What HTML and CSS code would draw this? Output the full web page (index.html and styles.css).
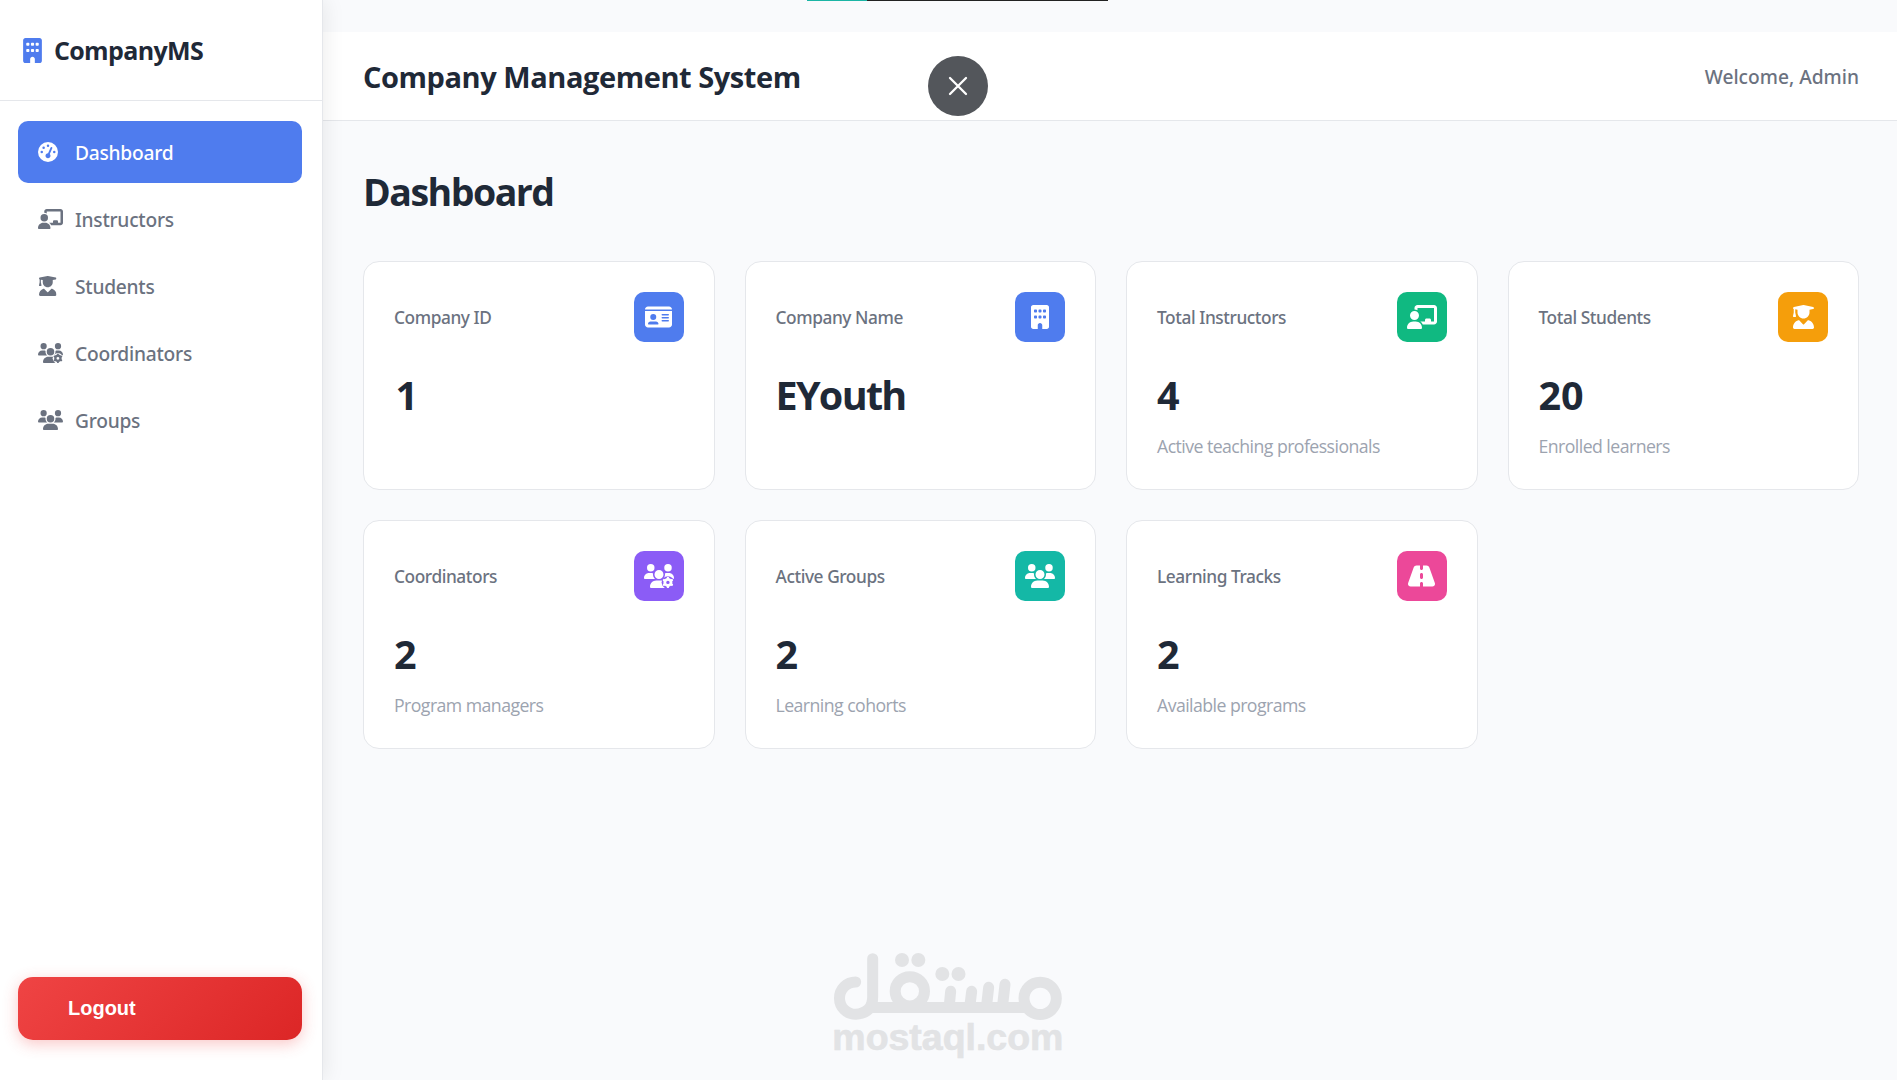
FILE: index.html
```
<!DOCTYPE html>
<html lang="en">
<head>
<meta charset="utf-8">
<title>Company Management System</title>
<link rel="stylesheet" href="styles.css">
</head>
<body>
<svg class="sprite" aria-hidden="true">
  <symbol id="building" viewBox="0 0 384 512"><path d="M48 0C21.500 0 0 21.500 0 48V464c0 26.500 21.500 48 48 48h96V432c0-26.500 21.500-48 48-48s48 21.500 48 48v80h96c26.500 0 48-21.500 48-48V48c0-26.500-21.500-48-48-48H48zM64 240c0-8.800 7.200-16 16-16h32c8.800 0 16 7.200 16 16v32c0 8.800-7.200 16-16 16H80c-8.800 0-16-7.200-16-16V240zm112-16h32c8.800 0 16 7.200 16 16v32c0 8.800-7.200 16-16 16H176c-8.800 0-16-7.200-16-16V240c0-8.800 7.200-16 16-16zm80 16c0-8.800 7.200-16 16-16h32c8.800 0 16 7.200 16 16v32c0 8.800-7.200 16-16 16H272c-8.800 0-16-7.200-16-16V240zM80 96h32c8.800 0 16 7.200 16 16v32c0 8.800-7.200 16-16 16H80c-8.800 0-16-7.200-16-16V112c0-8.800 7.200-16 16-16zm80 16c0-8.800 7.200-16 16-16h32c8.800 0 16 7.200 16 16v32c0 8.800-7.200 16-16 16H176c-8.800 0-16-7.200-16-16V112zM272 96h32c8.800 0 16 7.200 16 16v32c0 8.800-7.200 16-16 16H272c-8.800 0-16-7.200-16-16V112c0-8.800 7.200-16 16-16z"/></symbol>
  <symbol id="gauge" viewBox="0 0 512 512"><path d="M0 256a256 256 0 1 1 512 0A256 256 0 1 1 0 256zM288 96a32 32 0 1 0 -64 0 32 32 0 1 0 64 0zM256 416c35.300 0 64-28.700 64-64c0-17.400-6.900-33.100-18.100-44.600L366 161.700c5.300-12.100-.2-26.300-12.300-31.600s-26.300 .2-31.600 12.300L257.900 288c-.6 0-1.300 0-1.900 0c-35.300 0-64 28.700-64 64s28.700 64 64 64zM176 144a32 32 0 1 0 -64 0 32 32 0 1 0 64 0zM96 288a32 32 0 1 0 0-64 32 32 0 1 0 0 64zm352-32a32 32 0 1 0 -64 0 32 32 0 1 0 64 0z"/></symbol>
  <symbol id="instructor" viewBox="0 0 640 512"><path d="M160 64c0-35.300 28.700-64 64-64H576c35.300 0 64 28.700 64 64V352c0 35.300-28.700 64-64 64H336.800c-11.800-25.500-29.900-47.500-52.400-64H384V320c0-17.700 14.300-32 32-32h64c17.700 0 32 14.300 32 32v32h64V64L224 64v49.100C205.200 102.200 183.300 96 160 96V64zm0 64a96 96 0 1 1 0 192 96 96 0 1 1 0-192zM133.300 352h53.300C260.300 352 320 411.700 320 485.300c0 14.700-11.900 26.700-26.700 26.700H26.700C11.900 512 0 500.100 0 485.300C0 411.700 59.700 352 133.300 352z"/></symbol>
  <symbol id="student" viewBox="0 0 448 512"><path d="M219.300 .5c3.100-.6 6.300-.6 9.400 0l200 40C439.900 42.700 448 52.600 448 64s-8.100 21.300-19.300 23.500L352 102.900V160c0 70.700-57.300 128-128 128s-128-57.300-128-128V102.900L48 93.300v65.100l15.700 78.400c.9 4.700-.3 9.600-3.300 13.300s-7.600 5.900-12.400 5.900H16c-4.800 0-9.300-2.100-12.400-5.900s-4.300-8.600-3.300-13.300L16 158.400V86.600C6.500 83.300 0 74.300 0 64C0 52.600 8.100 42.700 19.300 40.500l200-40zM111.900 327.700c10.500-3.400 21.800 .4 29.400 8.500l71 75.500c6.300 6.700 17 6.700 23.300 0l71-75.500c7.600-8.100 18.900-11.900 29.400-8.500C401 348.600 448 409.400 448 481.300c0 17-13.800 30.700-30.700 30.700H30.700C13.800 512 0 498.200 0 481.300c0-71.900 47-132.700 111.900-153.600z"/></symbol>
  <symbol id="users" viewBox="0 0 640 512"><path id="users-shape" d="M144 0a80 80 0 1 1 0 160A80 80 0 1 1 144 0zM512 0a80 80 0 1 1 0 160A80 80 0 1 1 512 0zM0 298.700C0 239.800 47.800 192 106.700 192h42.700c15.900 0 31 3.500 44.600 9.700c-1.300 7.200-1.900 14.700-1.900 22.300c0 38.200 16.800 72.500 43.300 96H21.300C9.600 320 0 310.400 0 298.700zM405.300 320h-.7c26.600-23.500 43.300-57.800 43.300-96c0-7.600-.7-15-1.900-22.300c13.600-6.300 28.700-9.700 44.600-9.700h42.700C592.200 192 640 239.800 640 298.700c0 11.800-9.600 21.300-21.300 21.300H405.300zM224 224a96 96 0 1 1 192 0 96 96 0 1 1 -192 0zM128 485.300C128 411.700 187.700 352 261.300 352H378.700C452.300 352 512 411.700 512 485.300c0 14.700-11.900 26.700-26.700 26.700H154.700c-14.700 0-26.700-11.900-26.700-26.700z"/></symbol>
  <mask id="gear-gap" maskUnits="userSpaceOnUse" x="0" y="0" width="640" height="512"><path fill="#fff" d="M0 0h640v512H0z"/><circle cx="510" cy="393" r="134" fill="#000"/></mask>
  <symbol id="coordinators" viewBox="0 0 640 512"><use href="#users-shape" mask="url(#gear-gap)"/><circle cx="510" cy="393" r="66" fill="none" stroke="currentColor" stroke-width="60"/><path fill="none" stroke="currentColor" stroke-width="50" stroke-linecap="round" d="M510 302v-6M510 484v6M431 347l-6-3M589 347l6-3M431 439l-6 3M589 439l6 3"/></symbol>
  <symbol id="idcard" viewBox="0 0 576 512"><path d="M0 96l576 0c0-35.300-28.700-64-64-64H64C28.700 32 0 60.700 0 96zm0 32V416c0 35.300 28.700 64 64 64H512c35.300 0 64-28.700 64-64V128H0zM64 405.300c0-29.500 23.900-53.300 53.300-53.300H234.700c29.500 0 53.300 23.900 53.300 53.300c0 5.900-4.800 10.700-10.700 10.700H74.700c-5.900 0-10.700-4.800-10.700-10.700zM176 192a64 64 0 1 1 0 128 64 64 0 1 1 0-128zm176 16c0-8.800 7.200-16 16-16H496c8.800 0 16 7.200 16 16s-7.200 16-16 16H368c-8.800 0-16-7.200-16-16zm0 64c0-8.800 7.200-16 16-16H496c8.800 0 16 7.200 16 16s-7.200 16-16 16H368c-8.800 0-16-7.200-16-16zm0 64c0-8.800 7.200-16 16-16H496c8.800 0 16 7.200 16 16s-7.200 16-16 16H368c-8.800 0-16-7.200-16-16z"/></symbol>
  <symbol id="road" viewBox="0 0 576 512"><path d="M256 32H181.200c-27.100 0-51.300 17.100-60.300 42.600L3.100 407.200C1.100 413 0 419.200 0 425.400C0 455.500 24.500 480 54.600 480H256V416c0-17.700 14.300-32 32-32s32 14.300 32 32v64H521.400c30.200 0 54.600-24.500 54.600-54.600c0-6.200-1.100-12.400-3.100-18.200L455.100 74.600C446 49.100 421.900 32 394.800 32H320V96c0 17.700-14.300 32-32 32s-32-14.300-32-32V32zm64 192v64c0 17.700-14.300 32-32 32s-32-14.300-32-32V224c0-17.700 14.300-32 32-32s32 14.300 32 32z"/></symbol>
</svg>

<div class="app">
  <aside class="sidebar">
    <div class="brand"><svg class="brand-icon"><use href="#building"/></svg><span>CompanyMS</span></div>
    <nav class="nav">
      <a class="nav-item active"><span class="nav-icon"><svg class="w-512"><use href="#gauge"/></svg></span>Dashboard</a>
      <a class="nav-item"><span class="nav-icon"><svg class="w-640"><use href="#instructor"/></svg></span>Instructors</a>
      <a class="nav-item"><span class="nav-icon"><svg class="w-448"><use href="#student"/></svg></span>Students</a>
      <a class="nav-item"><span class="nav-icon"><svg class="w-640"><use href="#coordinators"/></svg></span>Coordinators</a>
      <a class="nav-item"><span class="nav-icon"><svg class="w-640"><use href="#users"/></svg></span>Groups</a>
    </nav>
    <button class="logout">Logout</button>
  </aside>

  <main class="main">
    <header class="topbar">
      <div class="system-name">Company Management System</div>
      <div class="welcome">Welcome, Admin</div>
    </header>
    <section class="content">
      <h1>Dashboard</h1>
      <div class="cards">
        <article class="card"><div class="card-head"><span>Company ID</span><div class="badge blue"><svg class="w-576"><use href="#idcard"/></svg></div></div><div class="value single">1</div></article>
        <article class="card"><div class="card-head"><span>Company Name</span><div class="badge blue"><svg class="w-384"><use href="#building"/></svg></div></div><div class="value name">EYouth</div></article>
        <article class="card"><div class="card-head"><span>Total Instructors</span><div class="badge green"><svg class="w-640"><use href="#instructor"/></svg></div></div><div class="value">4</div><p>Active teaching professionals</p></article>
        <article class="card"><div class="card-head"><span>Total Students</span><div class="badge amber"><svg class="w-448"><use href="#student"/></svg></div></div><div class="value">20</div><p>Enrolled learners</p></article>
        <article class="card"><div class="card-head"><span>Coordinators</span><div class="badge violet"><svg class="w-640"><use href="#coordinators"/></svg></div></div><div class="value">2</div><p>Program managers</p></article>
        <article class="card"><div class="card-head"><span>Active Groups</span><div class="badge teal"><svg class="w-640"><use href="#users"/></svg></div></div><div class="value">2</div><p>Learning cohorts</p></article>
        <article class="card"><div class="card-head"><span>Learning Tracks</span><div class="badge pink"><svg class="w-576"><use href="#road"/></svg></div></div><div class="value">2</div><p>Available programs</p></article>
      </div>
    </section>
  </main>
</div>

<div class="progress"></div>
<button class="close" aria-label="Close"><svg viewBox="0 0 60 60"><path d="M22 22 38 38M38 22 22 38"/></svg></button>
<div class="watermark">
  <svg viewBox="0 0 900 450">
    <g fill="none" stroke="#e2e3e5" stroke-width="33" stroke-linecap="round">
      <path d="M167 156A48.500 48.500 0 1 0 167 253Q218 248 218 200V86"/>
      <path d="M200 232.500H690" stroke-linecap="butt"/>
      <circle cx="329.500" cy="184" r="44"/>
      <circle cx="720.500" cy="205" r="48.500"/>
      <path d="M452 184 448 225M515 184 510 225M566 172 560 225M615 163 608 225"/>
    </g>
    <g fill="#e2e3e5"><circle cx="306" cy="90" r="21"/><circle cx="355" cy="90" r="21"/><circle cx="427" cy="132" r="21"/><circle cx="475.500" cy="132" r="21"/></g>
    <text x="97" y="359" textLength="693" lengthAdjust="spacingAndGlyphs">mostaql.com</text>
  </svg>
</div>
</body>
</html>
```
FILE: styles.css
```
* { box-sizing: border-box; margin: 0; }
body { height: 1080px; overflow: hidden; background: #f9fafc; color: #1f2937; font-family: "Noto Sans", sans-serif; }
svg { display: block; fill: currentColor; flex: none; }
.sprite { position: absolute; width: 0; height: 0; }
.app { display: flex; height: 1080px; }

.sidebar { display: flex; flex-direction: column; width: 323px; flex: none; background: #fff; border-right: 1px solid #e5e7eb; box-shadow: 2px 0 20px rgba(0, 0, 0, .08); z-index: 1; }
.brand { display: flex; align-items: center; gap: 12px; height: 101px; padding: 0 0 0 23px; border-bottom: 1px solid #e5e7eb; font: 700 25px/30px "Open Sans", sans-serif; letter-spacing: -.65px; }
.brand-icon { width: 19px; height: 25px; color: #4f7cee; }
.nav { display: flex; flex-direction: column; gap: 5px; padding: 20px 20px 0 18px; }
.nav-item { display: flex; align-items: center; gap: 17px; height: 62px; padding-left: 20px; border-radius: 10px; color: #6b7280; font-size: 19.200px; font-weight: 500; letter-spacing: -.25px; }
.nav-item.active { background: #4f7cee; color: #fff; }
.nav-icon { display: flex; width: 20px; padding-bottom: 1px; }
.nav-icon svg { height: 20px; }
.nav-icon .w-512 { width: 20px; }
.nav-icon .w-640 { width: 25px; }
.nav-icon .w-448 { width: 17.500px; margin-left: 1.200px; }
.logout { margin: auto 20px 40px 18px; height: 63px; padding: 0 50px; border: 0; border-radius: 15px; background: linear-gradient(135deg, #ef4444, #dc2626); box-shadow: 0 4px 15px rgba(239, 68, 68, .3); color: #fff; font: 700 20px "Liberation Sans", sans-serif; text-align: left; }

.main { flex: 1; padding-top: 32px; }
.topbar { display: flex; align-items: center; justify-content: space-between; height: 89px; padding: 0 38px 0 40px; background: #fff; border-bottom: 1px solid #e5e7eb; }
.system-name { padding-top: 2px; font: 700 29px/40px "Open Sans", sans-serif; letter-spacing: -.44px; }
.welcome { color: #6b7280; font-size: 19.200px; font-weight: 500; }
.content { padding: 40px 38px 0 40px; }
h1 { height: 100px; font: 700 37.500px/62px "Open Sans", sans-serif; letter-spacing: -1.500px; }
.cards { display: grid; grid-template-columns: repeat(4, 1fr); gap: 30px; }
.card { height: 229px; padding: 30px; background: #fff; border: 1px solid #e5e7eb; border-radius: 16px; }
.card-head { display: flex; align-items: center; justify-content: space-between; height: 50px; color: #6b7280; font-size: 17.300px; font-weight: 500; letter-spacing: -.42px; }
.badge { display: flex; align-items: center; justify-content: center; width: 50px; height: 50px; border-radius: 10px; color: #fff; }
.badge svg { height: 24px; }
.badge .w-384 { width: 18px; }
.badge .w-448 { width: 21px; }
.badge .w-576 { width: 27px; }
.badge .w-640 { width: 30px; }
.blue { background: #4f7cee; }
.green { background: #10b981; }
.amber { background: #f59e0b; }
.violet { background: #8b5cf6; }
.teal { background: #14b8a6; }
.pink { background: #ec4899; }
.value { margin-top: 26px; font: 700 39.500px/54px "Open Sans", sans-serif; }
.value.name { letter-spacing: -1.700px; }
.value.single { padding-left: 1.500px; }
.card p { margin-top: 12px; color: #9ca3af; font: 400 17.700px/24px "Open Sans", sans-serif; letter-spacing: -.55px; }

.progress { position: absolute; top: 0; left: 807px; width: 301px; height: 1px; background: linear-gradient(90deg, #1bb5a5 60px, #222 60px); }
.close { position: absolute; top: 56px; left: 928px; width: 60px; height: 60px; padding: 0; border: 0; border-radius: 50%; background: #53565b; z-index: 2; }
.close path { stroke: #fff; stroke-width: 2.300; stroke-linecap: round; }
.watermark { position: absolute; left: 800px; top: 930px; width: 300px; height: 150px; }
.watermark text { fill: #e2e3e5; stroke: #e2e3e5; stroke-width: 2; stroke-linejoin: round; font: 700 109px "Liberation Sans", sans-serif; }
```
